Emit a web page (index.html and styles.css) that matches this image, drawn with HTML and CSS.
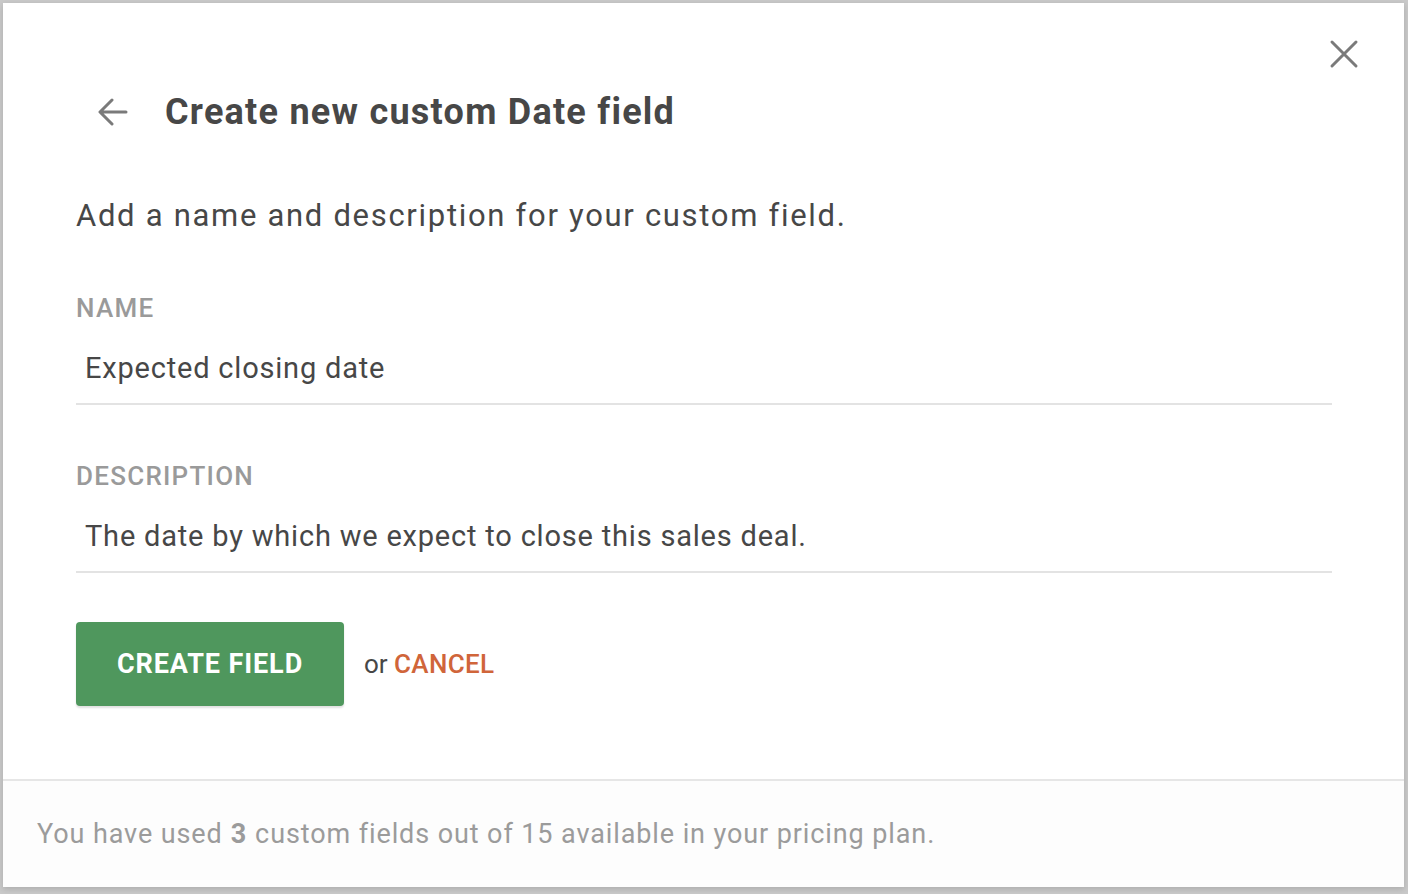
FILE: index.html
```html
<!DOCTYPE html>
<html>
<head>
<meta charset="utf-8">
<link rel="stylesheet" href="styles.css">
</head>
<body>
<div class="modal">
  <button class="close" aria-label="Close">
    <svg width="30" height="30" viewBox="0 0 30 30"><path d="M3 3 L27 27 M27 3 L3 27" stroke="#7a7a7a" stroke-width="3" stroke-linecap="round" fill="none"/></svg>
  </button>
  <div class="content">
    <div class="header">
      <span class="back">
        <svg width="30" height="28" viewBox="0 0 30 28"><path d="M28 14 H3 M14 2 L2 14 L14 26" stroke="#7a7a7a" stroke-width="3" stroke-linecap="round" stroke-linejoin="round" fill="none"/></svg>
      </span>
      <h1 class="title">Create new custom Date field</h1>
    </div>
    <p class="intro">Add a name and description for your custom field.</p>
    <div class="field">
      <div class="label">NAME</div>
      <div class="input">Expected closing date</div>
    </div>
    <div class="field">
      <div class="label">DESCRIPTION</div>
      <div class="input">The date by which we expect to close this sales deal.</div>
    </div>
    <div class="actions">
      <button class="primary">CREATE FIELD</button>
      <span class="or">or <a class="cancel">CANCEL</a></span>
    </div>
  </div>
  <div class="footer">You have used <b>3</b> custom fields out of 15 available in your pricing plan.</div>
</div>
</body>
</html>
```

FILE: styles.css
```css
html, body {
  margin: 0;
  padding: 0;
}
body {
  background: #c9c9c9;
  width: 1408px;
  height: 894px;
  overflow: hidden;
  font-family: Roboto, "Liberation Sans", sans-serif;
}
.modal {
  position: relative;
  margin: 3px 0 0 3px;
  width: 1401px;
  height: 884px;
  background: #fff;
  display: flex;
  flex-direction: column;
  box-shadow: 0 2px 6px rgba(0,0,0,0.15);
}
.close {
  position: absolute;
  top: 35px;
  right: 44px;
  width: 32px;
  height: 32px;
  padding: 0;
  border: 0;
  background: none;
  display: flex;
  align-items: center;
  justify-content: center;
}
.content {
  flex: 1;
  padding: 87px 72px 0 73px;
}
.header {
  display: flex;
  align-items: center;
  height: 44px;
}
.back {
  width: 30px;
  height: 28px;
  margin-left: 22px;
  margin-right: 37px;
  display: flex;
}
.title {
  margin: 0;
  font-size: 36px;
  line-height: 44px;
  font-weight: 700;
  color: #474747;
  letter-spacing: 1.25px;
}
.intro {
  margin: 62px 0 0 0;
  font-size: 31px;
  line-height: 40px;
  color: #474747;
  letter-spacing: 1.7px;
}
.field {
  margin-top: 56px;
}
.field + .field {
  margin-top: 55px;
}
.label {
  font-size: 26px;
  line-height: 32px;
  font-weight: 500;
  color: #9a9a9a;
  letter-spacing: 1.25px;
}
.input {
  margin-top: 27px;
  padding: 0 0 18px 9px;
  font-size: 29px;
  line-height: 34px;
  color: #474747;
  border-bottom: 2px solid #e3e3e3;
  letter-spacing: 0.8px;
}
.actions {
  margin-top: 49px;
  display: flex;
  align-items: center;
}
.primary {
  width: 268px;
  height: 84px;
  border: 0;
  border-radius: 4px;
  background: #4f975d;
  color: #fff;
  font-family: inherit;
  font-size: 27px;
  font-weight: 700;
  letter-spacing: 0.9px;
  box-shadow: 0 2px 2px rgba(0,0,0,0.12);
}
.or {
  margin-left: 20px;
  font-size: 26px;
  color: #474747;
}
.cancel {
  color: #d0653a;
  font-weight: 500;
  letter-spacing: 0.3px;
}
.footer {
  height: 108px;
  border-top: 2px solid #e6e6e6;
  background: #fdfdfd;
  box-sizing: border-box;
  padding-left: 34px;
  display: flex;
  align-items: center;
  font-size: 27px;
  color: #9b9b9b;
  letter-spacing: 0.9px;
}
.footer b {
  font-weight: 700;
  margin: 0 8px 0 8px;
}
```
